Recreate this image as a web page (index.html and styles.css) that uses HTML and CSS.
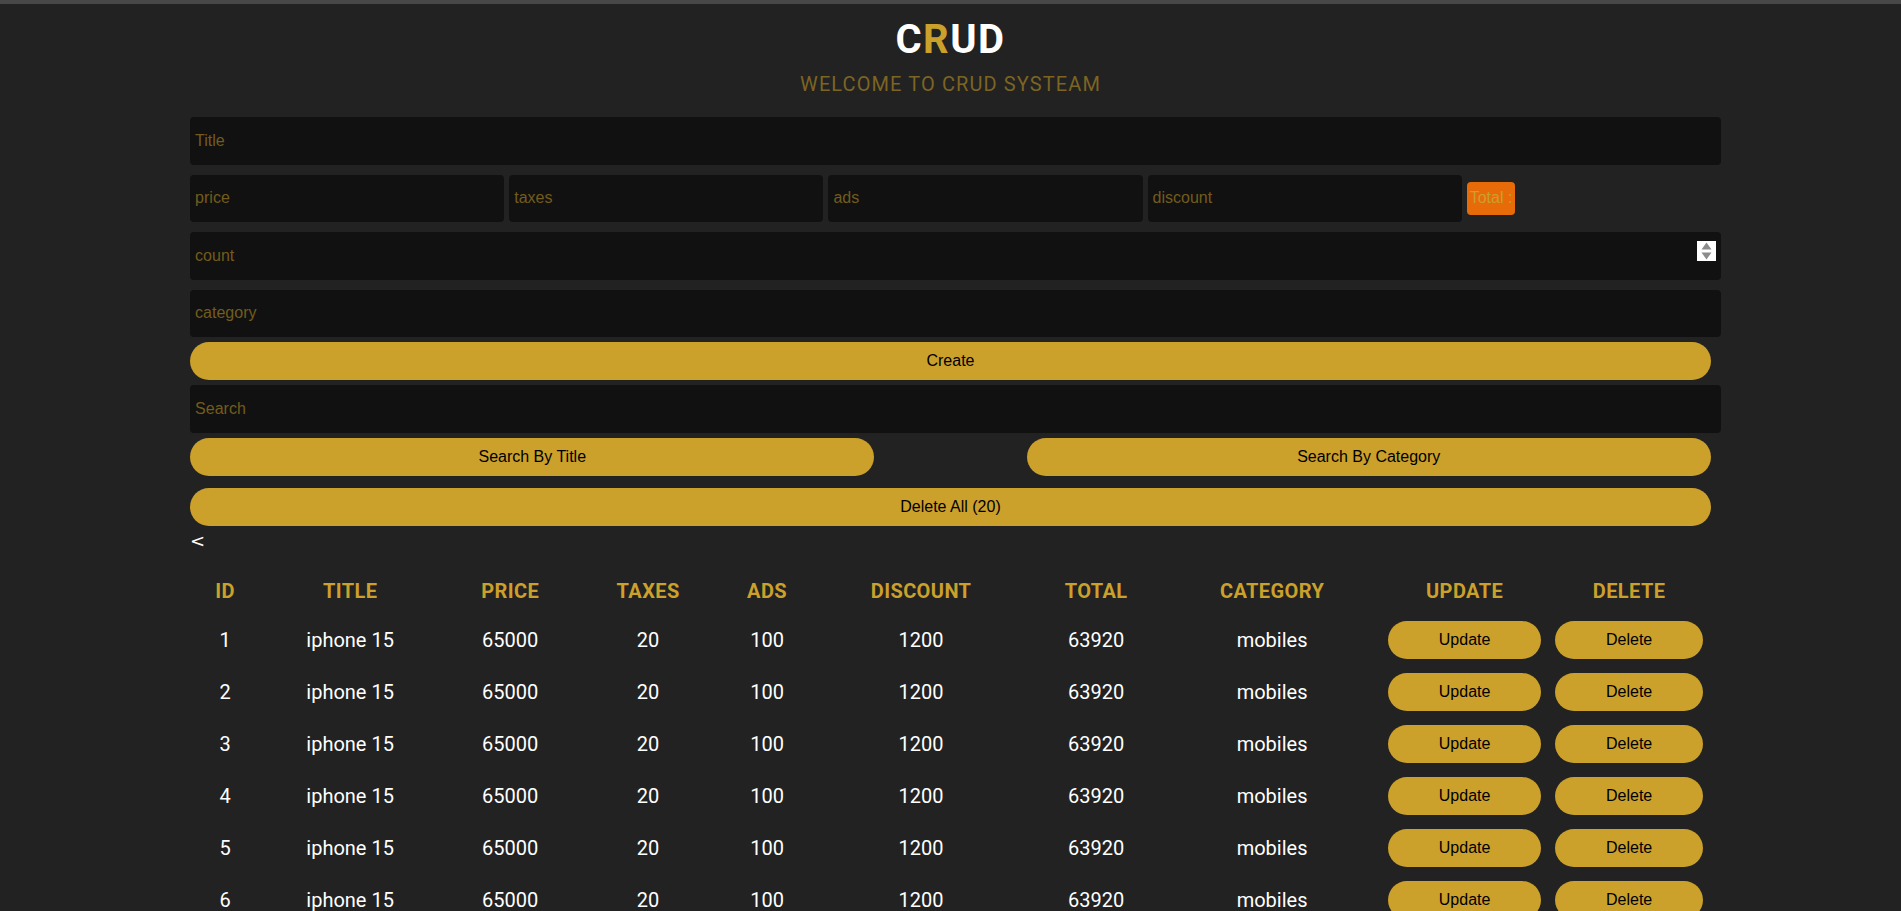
FILE: index.html
```html
<!DOCTYPE html>
<html lang="en">
<head>
<meta charset="utf-8">
<title>CRUD</title>
<link rel="stylesheet" href="styles.css">
</head>
<body>
<div class="topbar"></div>
<div class="crud">
  <header class="head">
    <h1 class="logo">C<span class="logo-r">R</span>UD</h1>
    <p class="subtitle">Welcome to crud systeam</p>
  </header>
  <div class="inputs">
    <input class="field" type="text" placeholder="Title">
    <div class="price-row">
      <input class="field field-quarter" type="text" placeholder="price">
      <input class="field field-quarter" type="text" placeholder="taxes">
      <input class="field field-quarter" type="text" placeholder="ads">
      <input class="field field-quarter" type="text" placeholder="discount">
      <small class="total">Total :</small>
    </div>
    <div class="count-wrap">
      <input class="field" type="text" placeholder="count">
      <svg class="spinner" width="19" height="20" viewBox="0 0 19 20">
        <rect width="19" height="20" fill="#ffffff"/>
        <polygon points="4.5,8.5 9.5,1.5 14.5,8.5" fill="#8c8c8c"/>
        <polygon points="4.5,11.5 9.5,18.5 14.5,11.5" fill="#8c8c8c"/>
      </svg>
    </div>
    <input class="field" type="text" placeholder="category">
    <button class="btn btn-wide">Create</button>
  </div>
  <div class="outputs">
    <input class="field" type="text" placeholder="Search">
    <div class="search-btns">
      <button class="btn btn-half">Search By Title</button>
      <button class="btn btn-half">Search By Category</button>
    </div>
    <button class="btn btn-wide btn-delete-all">Delete All (20)</button>
    <div class="back">&lt;</div>
    <table class="products">
      <colgroup>
        <col class="c-id"><col class="c-title"><col class="c-price"><col class="c-taxes"><col class="c-ads">
        <col class="c-discount"><col class="c-total"><col class="c-category"><col class="c-update"><col class="c-delete">
      </colgroup>
      <thead>
        <tr><th>Id</th><th>Title</th><th>Price</th><th>Taxes</th><th>Ads</th><th>Discount</th><th>Total</th><th>Category</th><th>Update</th><th>Delete</th></tr>
      </thead>
      <tbody>
        <tr><td>1</td><td>iphone 15</td><td>65000</td><td>20</td><td>100</td><td>1200</td><td>63920</td><td>mobiles</td><td><button class="btn btn-update">Update</button></td><td><button class="btn btn-del">Delete</button></td></tr>
        <tr><td>2</td><td>iphone 15</td><td>65000</td><td>20</td><td>100</td><td>1200</td><td>63920</td><td>mobiles</td><td><button class="btn btn-update">Update</button></td><td><button class="btn btn-del">Delete</button></td></tr>
        <tr><td>3</td><td>iphone 15</td><td>65000</td><td>20</td><td>100</td><td>1200</td><td>63920</td><td>mobiles</td><td><button class="btn btn-update">Update</button></td><td><button class="btn btn-del">Delete</button></td></tr>
        <tr><td>4</td><td>iphone 15</td><td>65000</td><td>20</td><td>100</td><td>1200</td><td>63920</td><td>mobiles</td><td><button class="btn btn-update">Update</button></td><td><button class="btn btn-del">Delete</button></td></tr>
        <tr><td>5</td><td>iphone 15</td><td>65000</td><td>20</td><td>100</td><td>1200</td><td>63920</td><td>mobiles</td><td><button class="btn btn-update">Update</button></td><td><button class="btn btn-del">Delete</button></td></tr>
        <tr><td>6</td><td>iphone 15</td><td>65000</td><td>20</td><td>100</td><td>1200</td><td>63920</td><td>mobiles</td><td><button class="btn btn-update">Update</button></td><td><button class="btn btn-del">Delete</button></td></tr>
      </tbody>
    </table>
  </div>
</div>
</body>
</html>
```
FILE: styles.css
```css
html {
  scrollbar-width: none;
}
body {
  margin: 0;
  background: #222222;
  font-family: "Liberation Sans", Arial, sans-serif;
}
.topbar {
  height: 4px;
  background: #484848;
}
.crud {
  width: 80%;
  margin: 0 auto;
}
.head {
  text-align: center;
  font-family: Roboto, "Liberation Sans", sans-serif;
}
.logo {
  margin: 16px 0 0;
  font-size: 40px;
  line-height: 40px;
  font-weight: 700;
  letter-spacing: 1.5px;
  color: #ffffff;
}
.logo-r {
  color: #cba02b;
}
.subtitle {
  margin: 14px 0 0;
  font-size: 20px;
  line-height: 20px;
  text-transform: uppercase;
  letter-spacing: 1.1px;
  color: #7c6423;
}
.inputs {
  margin-top: 18px;
  display: flex;
  flex-direction: column;
}
.outputs {
  display: flex;
  flex-direction: column;
}
.field {
  flex: none;
  box-sizing: content-box;
  width: 100%;
  height: 37.5px;
  padding: 5px;
  margin: 5px 0;
  border: none;
  border-radius: 4px;
  outline: none;
  background: #111111;
  color: #cba02b;
  font-family: "Liberation Sans", Arial, sans-serif;
  font-size: 16px;
}
.field::placeholder {
  color: #735c1c;
}
.price-row {
  display: flex;
  align-items: center;
  gap: 5px;
}
.field-quarter {
  width: 20%;
}
.total {
  flex: none;
  padding: 7.5px 3px;
  border-radius: 4px;
  background: #e86b0a;
  color: #c9a02a;
  font-size: 16px;
  line-height: 18px;
}
.count-wrap {
  position: relative;
  display: flex;
}
.spinner {
  position: absolute;
  left: 1507px;
  top: 14px;
}
.btn {
  flex: none;
  height: 38px;
  border: none;
  border-radius: 20px;
  background: #cba02b;
  color: #000000;
  font-family: "Liberation Sans", Arial, sans-serif;
  font-size: 16px;
  cursor: pointer;
}
.btn-wide {
  width: 100%;
}
.search-btns {
  display: flex;
  justify-content: space-between;
}
.btn-half {
  width: 45%;
}
.btn-delete-all {
  margin-top: 12px;
}
.back {
  margin-top: 5px;
  height: 20px;
  line-height: 20px;
  font-family: "DejaVu Sans", sans-serif;
  font-size: 18px;
  color: #ffffff;
}
.products {
  margin-top: 17px;
  width: 1515px;
  table-layout: fixed;
  border-collapse: collapse;
  font-family: Roboto, "Liberation Sans", sans-serif;
  font-size: 20px;
  text-align: center;
}
.c-id { width: 70px; }
.c-title { width: 180px; }
.c-price { width: 140px; }
.c-taxes { width: 136px; }
.c-ads { width: 102px; }
.c-discount { width: 206px; }
.c-total { width: 144px; }
.c-category { width: 208px; }
.c-update { width: 177px; }
.c-delete { width: 152px; }
.products th {
  height: 46px;
  padding: 0;
  font-weight: 700;
  text-transform: uppercase;
  letter-spacing: 0.4px;
  color: #cba02b;
}
.products td {
  height: 52px;
  padding: 0;
  color: #ffffff;
}
.btn-update {
  width: 153px;
}
.btn-del {
  width: 148px;
}
```
